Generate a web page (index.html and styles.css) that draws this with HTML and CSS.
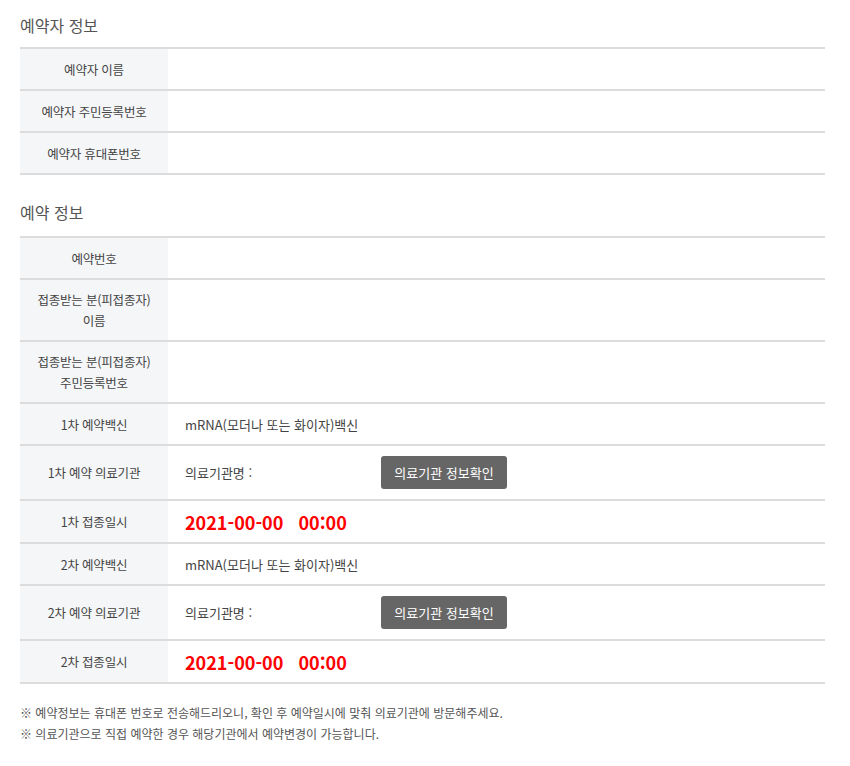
FILE: index.html
```html
<!DOCTYPE html>
<html lang="ko">
<head>
<meta charset="utf-8">
<link rel="stylesheet" href="styles.css">
</head>
<body>
<div class="page">
  <section class="sec sec-first">
    <h2 class="title">예약자 정보</h2>
    <div class="tbl">
      <div class="row"><div class="th">예약자 이름</div><div class="td"></div></div>
      <div class="row"><div class="th">예약자 주민등록번호</div><div class="td"></div></div>
      <div class="row"><div class="th">예약자 휴대폰번호</div><div class="td"></div></div>
    </div>
  </section>
  <section class="sec sec-second">
    <h2 class="title title2">예약 정보</h2>
    <div class="tbl">
      <div class="row"><div class="th">예약번호</div><div class="td"></div></div>
      <div class="row tall"><div class="th">접종받는 분(피접종자)<br>이름</div><div class="td"></div></div>
      <div class="row tall"><div class="th">접종받는 분(피접종자)<br>주민등록번호</div><div class="td"></div></div>
      <div class="row"><div class="th">1차 예약백신</div><div class="td">mRNA(모더나 또는 화이자)백신</div></div>
      <div class="row mid"><div class="th">1차 예약 의료기관</div><div class="td"><span class="org">의료기관명 :</span><button class="btn" type="button">의료기관 정보확인</button></div></div>
      <div class="row drow"><div class="th">1차 접종일시</div><div class="td date">2021-00-00&nbsp;&nbsp; 00:00</div></div>
      <div class="row"><div class="th">2차 예약백신</div><div class="td">mRNA(모더나 또는 화이자)백신</div></div>
      <div class="row mid"><div class="th">2차 예약 의료기관</div><div class="td"><span class="org">의료기관명 :</span><button class="btn" type="button">의료기관 정보확인</button></div></div>
      <div class="row drow"><div class="th">2차 접종일시</div><div class="td date">2021-00-00&nbsp;&nbsp; 00:00</div></div>
    </div>
  </section>
  <div class="notes">
    <p>※ 예약정보는 휴대폰 번호로 전송해드리오니, 확인 후 예약일시에 맞춰 의료기관에 방문해주세요.</p>
    <p>※ 의료기관으로 직접 예약한 경우 해당기관에서 예약변경이 가능합니다.</p>
  </div>
</div>
</body>
</html>
```
FILE: styles.css
```css
* { box-sizing: border-box; }
html, body { margin: 0; padding: 0; background: #fff; }
body {
  font-family: "Noto Sans CJK KR", "Noto Sans", sans-serif;
  color: #444;
}
.page {
  width: 805px;
  margin-left: 20px;
}
.title {
  margin: 13px 0 10px;
  font-size: 16px;
  line-height: 24px;
  font-weight: normal;
  color: #555;
}
.title2 { margin: 25px 0 12px; }
.tbl { border-top: 2px solid #dcdcdc; }
.row {
  display: grid;
  grid-template-columns: 148px 1fr;
  min-height: 42px;
  border-bottom: 2px solid #dcdcdc;
}
.row.tall { min-height: 62px; }
.row.mid { min-height: 55px; }
.row.drow { min-height: 43px; }
.th {
  background: #f5f6f8;
  display: flex;
  align-items: center;
  justify-content: center;
  text-align: center;
  font-size: 12.5px;
  letter-spacing: -0.2px;
  line-height: 21px;
  color: #444;
}
.td {
  display: flex;
  align-items: center;
  padding-left: 17px;
  font-size: 13px;
  color: #444;
}
.org { width: 196px; }
.btn {
  width: 126px;
  height: 33px;
  border: 0;
  border-radius: 3px;
  background: #666;
  color: #fff;
  font-family: inherit;
  font-size: 13px;
  padding: 0;
  cursor: pointer;
}
.date {
  color: #f00;
  font-size: 18px;
  font-weight: bold;
  white-space: pre;
}
.notes {
  margin-top: 18px;
  font-size: 12px;
  line-height: 21px;
  color: #555;
}
.notes p { margin: 0; }
```
